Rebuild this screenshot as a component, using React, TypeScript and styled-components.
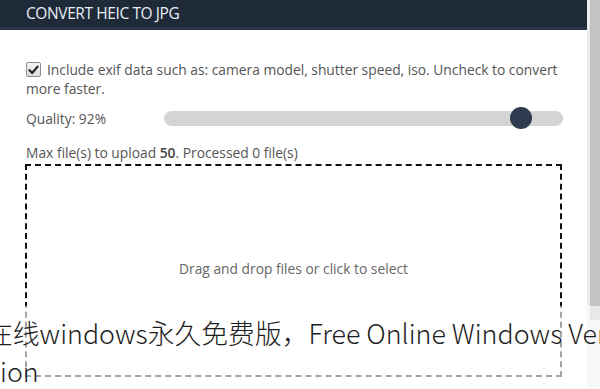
import React from "react";
import styled, { createGlobalStyle } from "styled-components";

const Global = createGlobalStyle`
  html, body { margin: 0; padding: 0; background: #fff; overflow: hidden; }
  body { font-family: "Open Sans", "Liberation Sans", sans-serif; }
  #root { width: 600px; height: 389px; position: relative; overflow: hidden; }
`;

const Shell = styled.div`
  display: flex;
  width: 600px;
  height: 389px;
`;

const Main = styled.div`
  width: 587px;
  display: flex;
  flex-direction: column;
`;

const Header = styled.div`
  height: 25px;
  background: #1f2a39;
  border-bottom: 3px solid #2a3647;
  display: flex;
  align-items: center;
  padding-left: 26px;
  padding-bottom: 2px;
  color: #e9eef4;
  font-size: 15.5px;
  letter-spacing: -0.4px;
  box-sizing: content-box;
`;

const Body = styled.div`
  padding: 30px 25px 0 26px;
  color: #555;
  font-size: 13.8px;
  line-height: 19px;
  display: flex;
  flex-direction: column;
`;

const CheckRow = styled.label`
  display: flex;
  align-items: flex-start;
  gap: 6px;
`;

const Box = styled.span`
  flex: none;
  width: 13px;
  height: 13px;
  margin-top: 2px;
  border: 1px solid #8d8d8d;
  border-radius: 2px;
  background: linear-gradient(#f4f4f4, #dcdcdc);
  display: flex;
  align-items: center;
  justify-content: center;
`;

const Para = styled.div`
  display: block;
`;

const QualityRow = styled.div`
  display: flex;
  align-items: center;
  height: 22px;
  margin-top: 9px;
`;

const QualityLabel = styled.span`
  width: 138px;
  flex: none;
`;

const Track = styled.div`
  position: relative;
  flex: 1;
  height: 15px;
  border-radius: 8px;
  background: #d4d4d4;
  margin-right: -1px;
`;

const Thumb = styled.div`
  position: absolute;
  top: 50%;
  width: 22px;
  height: 22px;
  margin: -11px 0 0 -11px;
  border-radius: 50%;
  background: #2e3a4d;
`;

const Limits = styled.div`
  margin-top: 14px;
  b { font-weight: 600; color: #444; }
`;

const Drop = styled.div`
  margin-top: 2px;
  margin-left: -1px;
  height: 205px;
  border: 2px dashed #111;
  display: flex;
  align-items: center;
  justify-content: center;
  color: #666;
  padding-bottom: 4px;
  box-sizing: content-box;
`;

const Scroll = styled.div`
  width: 13px;
  background: #ececec;
  display: flex;
  justify-content: flex-end;
`;

const ScrollThumb = styled.div`
  width: 10px;
  height: 320px;
  background: #c3c3c3;
`;

const Caption = styled.div`
  position: absolute;
  left: 0;
  right: 0;
  top: 306px;
  bottom: 0;
  background: rgba(255, 255, 255, 0.62);
  padding-top: 8px;
  overflow: hidden;
  font-family: "Noto Sans CJK SC", "Noto Sans", sans-serif;
  font-weight: 300;
  font-size: 26.8px;
  line-height: 38px;
  color: #1e1e1e;
`;

const CaptionLine = styled.div<{ $indent?: number }>`
  white-space: nowrap;
  text-indent: ${(p) => p.$indent ?? 0}px;
`;

export default function App() {
  return (
    <>
      <Global />
      <Shell>
        <Main>
          <Header>CONVERT HEIC TO JPG</Header>
          <Body>
            <CheckRow>
              <Box>
                <svg width="11" height="10" viewBox="0 0 11 10">
                  <path d="M1.5 5.2 L4.2 8 L9.6 1.6" fill="none" stroke="#222" strokeWidth="2.2" strokeLinecap="round" strokeLinejoin="round" />
                </svg>
              </Box>
              <Para>Include exif data such as: camera model, shutter speed, iso. Uncheck to convert</Para>
            </CheckRow>
            <Para>more faster.</Para>
            <QualityRow>
              <QualityLabel>Quality: 92%</QualityLabel>
              <Track>
                <Thumb style={{ left: `${(356 / 398) * 100}%` }} />
              </Track>
            </QualityRow>
            <Limits>
              Max file(s) to upload <b>50</b>. Processed 0 file(s)
            </Limits>
            <Drop>Drag and drop files or click to select</Drop>
          </Body>
        </Main>
        <Scroll>
          <ScrollThumb />
        </Scroll>
      </Shell>
      <Caption>
        <CaptionLine $indent={-14}>在线windows永久免费版，Free Online Windows Version</CaptionLine>
        <CaptionLine>ion</CaptionLine>
      </Caption>
    </>
  );
}
